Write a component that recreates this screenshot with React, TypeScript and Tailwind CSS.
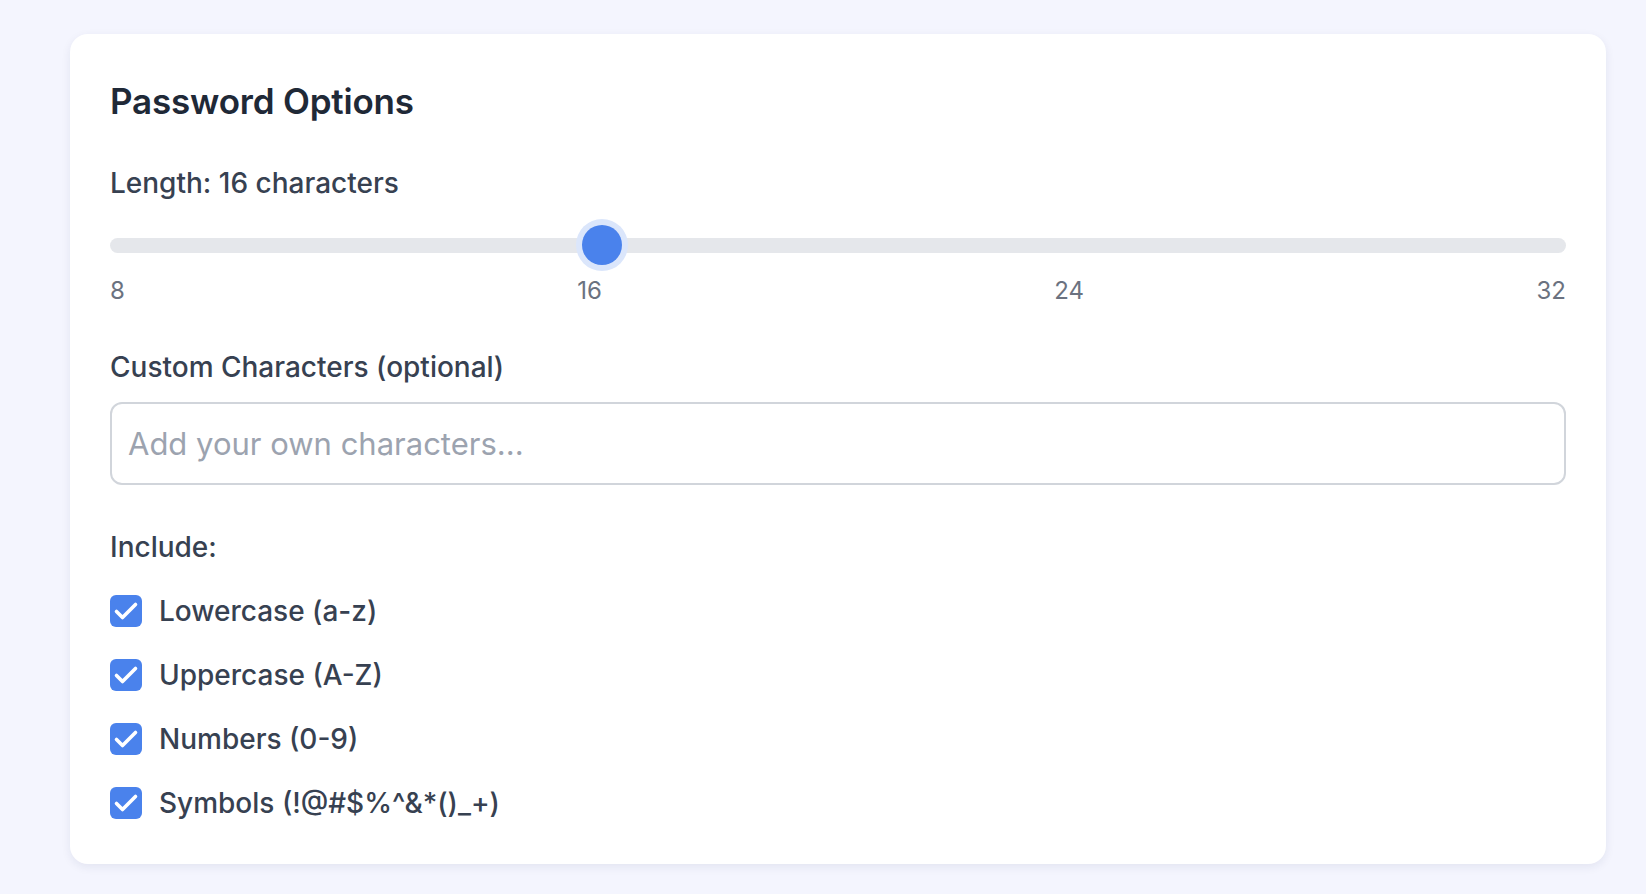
import React from "react";

const options = [
  { id: "lower", label: "Lowercase (a-z)", checked: true },
  { id: "upper", label: "Uppercase (A-Z)", checked: true },
  { id: "numbers", label: "Numbers (0-9)", checked: true },
  { id: "symbols", label: "Symbols (!@#$%^&*()_+)", checked: true },
];

const ticks = [8, 16, 24, 32];
const min = 8;
const max = 32;
const length = 16;

const CheckBox = ({ checked }: { checked: boolean }) => (
  <div
    className={
      checked
        ? "w-[32px] h-[32px] rounded-[6px] bg-[#4a82ec] flex items-center justify-center shrink-0"
        : "w-[32px] h-[32px] rounded-[6px] border-2 border-gray-300 bg-white shrink-0"
    }
  >
    {checked && (
      <svg width="32" height="32" viewBox="0 0 32 32" fill="none">
        <polyline
          points="6.5,16.5 12.5,22.5 25.5,9.5"
          stroke="white"
          strokeWidth="3.6"
          strokeLinecap="round"
          strokeLinejoin="round"
        />
      </svg>
    )}
  </div>
);

export default function App() {
  const pct = (length - min) / (max - min);

  return (
    <div
      className="min-h-screen bg-[#f4f5fe] pt-[34px] pl-[70px] pr-[40px] pb-[32px]"
      style={{ fontFamily: "Inter, 'Noto Sans', sans-serif" }}
    >
      <div className="bg-white rounded-[18px] shadow-[0_3px_10px_rgba(30,41,90,0.08)] p-[40px]">
        <h2 className="text-[35px] leading-[54px] font-semibold text-[#1f2937] tracking-[-0.2px]">
          Password Options
        </h2>

        {/* length slider */}
        <div className="mt-[34px]">
          <label className="block text-[28px] leading-[42px] font-medium text-[#374151]">
            Length: {length} characters
          </label>
          <div className="relative h-[52px] mt-[15px] flex items-center">
            <div className="w-full h-[15px] rounded-full bg-[#e5e7eb]" />
            <div
              className="absolute top-[6px] w-[40px] h-[40px] rounded-full bg-[#4a82ec] shadow-[0_0_0_6px_#dbe6fb]"
              style={{ left: `calc(${pct} * (100% - 40px))` }}
            />
          </div>
          <div className="flex justify-between mt-[2px] text-[24px] leading-[36px] text-[#6b7280]">
            {ticks.map((t) => (
              <span key={t}>{t}</span>
            ))}
          </div>
        </div>

        {/* custom chars */}
        <div className="mt-[37px]">
          <label className="block text-[28px] leading-[42px] font-medium text-[#374151]">
            Custom Characters (optional)
          </label>
          <input
            type="text"
            placeholder="Add your own characters..."
            className="mt-[14px] w-full h-[83px] rounded-[12px] border-2 border-[#d1d5db] px-[16px] text-[31px] text-[#1f2937] placeholder:text-[#9ca3af] outline-none"
          />
        </div>

        {/* include */}
        <div className="mt-[41px]">
          <div className="text-[28px] leading-[42px] font-medium text-[#374151]">Include:</div>
          <div className="mt-[22px] flex flex-col gap-[22px]">
            {options.map((o) => (
              <label key={o.id} className="flex items-center gap-[17px] h-[42px]">
                <CheckBox checked={o.checked} />
                <span className="text-[28px] leading-[42px] font-medium text-[#374151]">{o.label}</span>
              </label>
            ))}
          </div>
        </div>
      </div>
    </div>
  );
}
